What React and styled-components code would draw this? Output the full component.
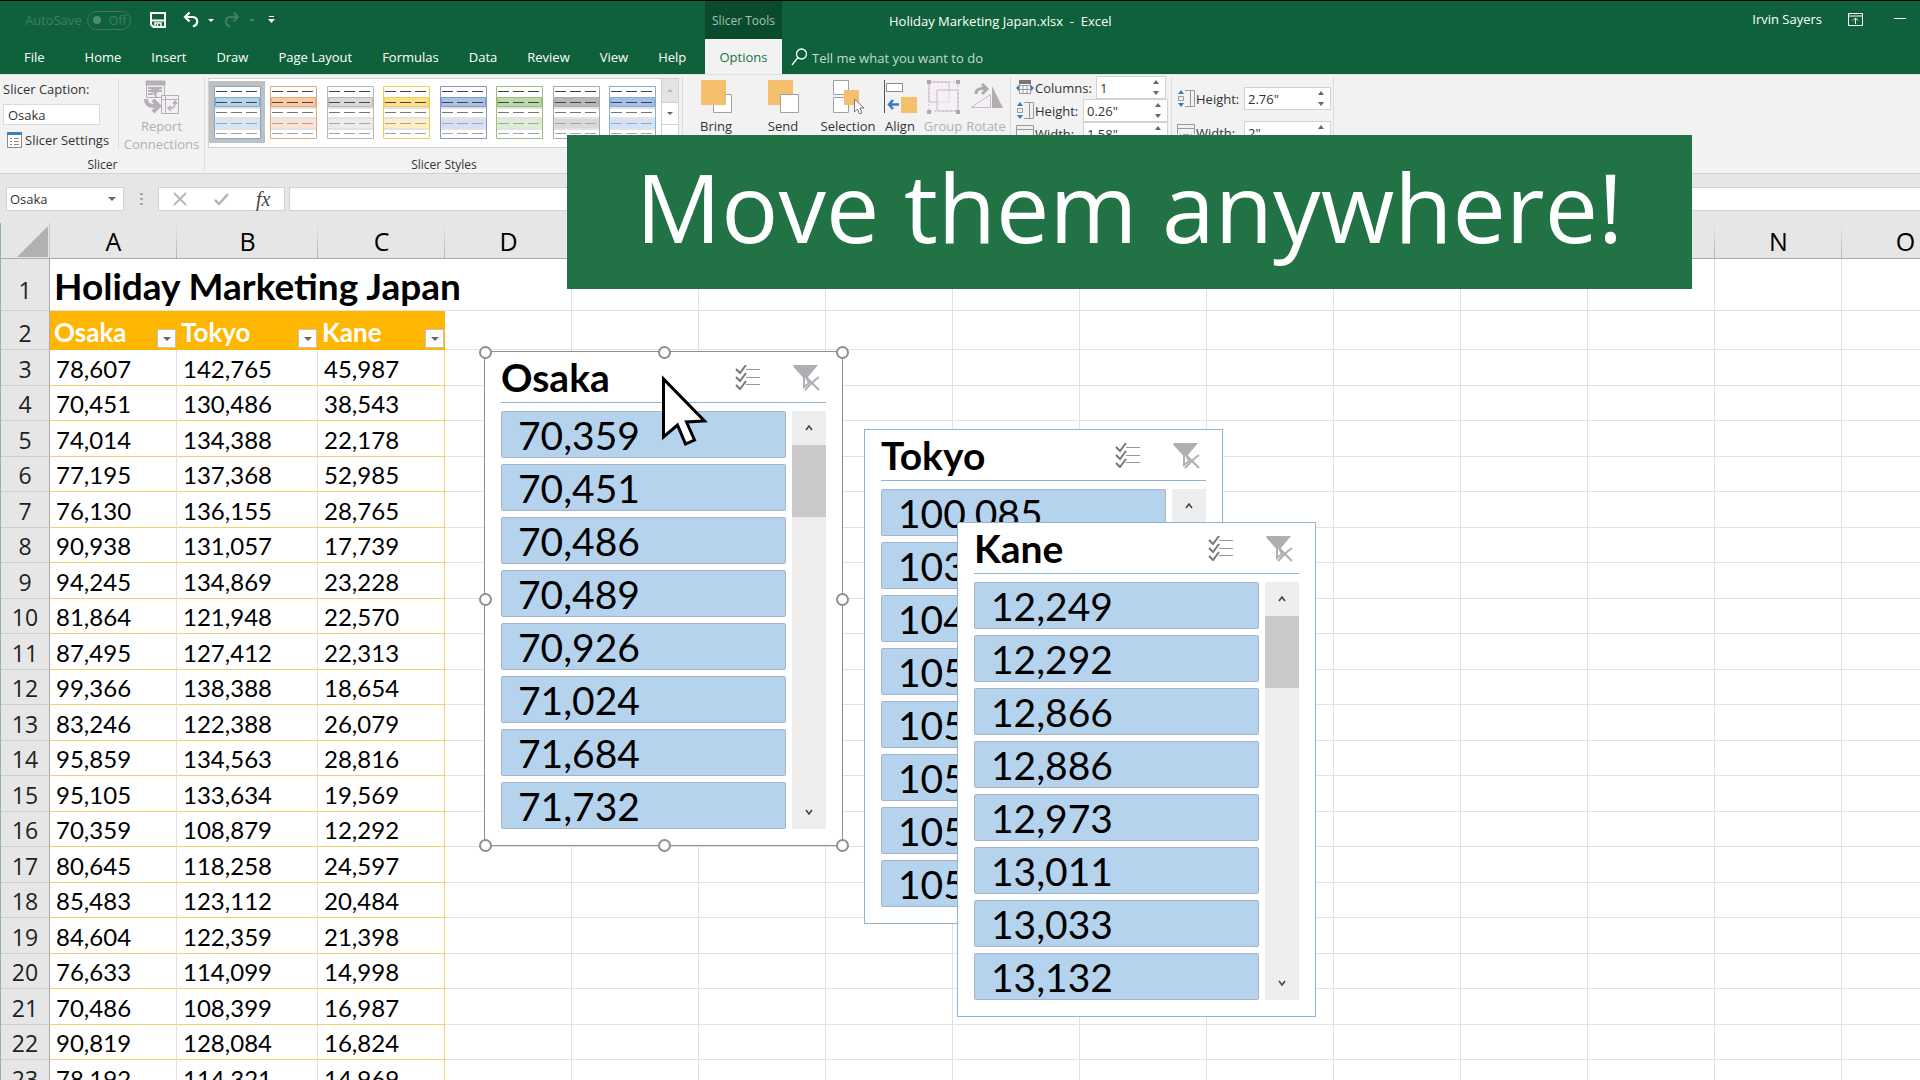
import React, { useState } from "react";
import styled, { createGlobalStyle, css } from "styled-components";

// Theme==============
const color = {
  green: "#0f613c",
  darkGreen: "#0a4a2d",
  banner: "#217346",
  ribbon: "#f2f2f2",
  chrome: "#e6e6e6",
  line: "#d2d2d2",
  text: "#333333",
  muted: "#b1b1b1",
  header: "#ffb600",
  item: "#b6d3ee",
  slicerLine: "#8db4d2",
};
const ui = `"Open Sans", "Noto Sans", sans-serif`;
const body = `Lato, "Open Sans", sans-serif`;
// ===================

const GlobalStyle = createGlobalStyle`
  * { box-sizing: border-box; }
  body {
    margin: 0;
    overflow: hidden;
    font-family: ${ui};
    font-size: 13px;
    color: ${color.text};
  }
  button, input {
    font: inherit;
    color: inherit;
    margin: 0;
    padding: 0;
    border: 0;
    background: none;
  }
  svg { display: block; flex: none; }
`;

const Page = styled.div`
  position: relative;
  height: 100vh;
  overflow: hidden;
  background: white;
`;

// Title bar and tabs
const TopBar = styled.header`
  background: ${color.green};
  border-top: 1px solid black;
  color: white;
`;

const TitleRow = styled.div`
  display: flex;
  height: 38px;
`;

const QuickAccess = styled.div`
  width: 705px;
  display: flex;
  align-items: center;
  padding-left: 25px;
`;

const AutoSave = styled.label`
  display: flex;
  align-items: center;
  gap: 5px;
  width: 125px;
  color: #3f8060;
`;

const Toggle = styled.button`
  display: flex;
  align-items: center;
  gap: 8px;
  width: 44px;
  height: 19px;
  padding-left: 5px;
  border: 1px solid #3a7a5a;
  border-radius: 10px;
  font-size: 12px;
  &::before {
    content: "";
    width: 8px;
    height: 8px;
    border-radius: 50%;
    background: #4c8a6b;
  }
`;

const QuickButton = styled.button`
  display: flex;
  align-items: center;
  gap: 9px;
  width: ${({ $width }) => $width}px;
  color: ${({ $dim }) => ($dim ? "#3f8060" : "white")};
`;

const ContextTitle = styled.div`
  width: 77px;
  line-height: 40px;
  text-align: center;
  font-size: 12px;
  white-space: nowrap;
  background: ${color.darkGreen};
  color: #a3c5b3;
`;

const DocTitle = styled.div`
  padding-left: 107px;
  line-height: 40px;
  white-space: pre;
`;

const WindowTools = styled.div`
  display: flex;
  align-items: center;
  margin-left: auto;
  padding: 0 14px 2px 0;
`;

const WindowButton = styled.button`
  margin-left: ${({ $gap }) => $gap}px;
`;

const TabRow = styled.nav`
  display: flex;
  height: 35px;
`;

const TabList = styled.div`
  display: flex;
  width: 705px;
  padding-left: 9px;
`;

const Tab = styled.button`
  padding: 0 15px;
  white-space: nowrap;
  &:first-child {
    padding-right: 25px;
  }
  ${({ $active }) =>
    $active &&
    css`
      width: 77px;
      padding: 0;
      background: ${color.ribbon};
      color: ${color.banner};
    `}
`;

const TellMe = styled.label`
  display: flex;
  align-items: center;
  gap: 4px;
  padding-left: 9px;
  input {
    width: 220px;
    padding-top: 2px;
  }
  input::placeholder {
    color: #c3dacd;
    opacity: 1;
  }
`;

// Ribbon
const RibbonBar = styled.section`
  display: flex;
  height: 100px;
  background: ${color.ribbon};
  border-top: 1px solid #d5e6dc;
  border-bottom: 1px solid ${color.line};
`;

const Group = styled.div`
  display: flex;
  flex-direction: column;
  justify-content: space-between;
  width: ${({ $width }) => $width}px;
  position: relative;
  &::after {
    content: "";
    position: absolute;
    top: 2px;
    right: 0;
    bottom: 2px;
    width: 1px;
    background: #dcdcdc;
  }
`;

const GroupLabel = styled.div`
  text-align: center;
  font-size: 12px;
  line-height: 16px;
`;

const CaptionArea = styled.div`
  display: flex;
`;

const CaptionFields = styled.div`
  display: flex;
  flex-direction: column;
  width: 119px;
  height: 70px;
  margin-top: 4px;
  padding-left: 3px;
  border-right: 1px solid #dcdcdc;
  label {
    line-height: 20px;
  }
  input {
    width: 97px;
    height: 22px;
    margin: 5px 0 6px;
    padding-left: 4px;
    border: 1px solid #dadada;
    background: white;
  }
`;

const SettingsButton = styled.button`
  display: flex;
  align-items: center;
  gap: 3px;
  padding-left: 4px;
  line-height: 18px;
  white-space: nowrap;
`;

const BigButton = styled.button`
  display: flex;
  flex-direction: column;
  align-items: center;
  gap: 3px;
  width: ${({ $width }) => $width}px;
  padding-top: 5px;
  line-height: 18px;
  white-space: nowrap;
  color: ${({ disabled }) => (disabled ? color.muted : color.text)};
`;

const Gallery = styled.div`
  display: flex;
  height: 70px;
  margin: 3px 4px 0 3px;
  border: 1px solid ${color.line};
  background: white;
`;

const Swatches = styled.div`
  flex: 1;
  display: flex;
  justify-content: space-between;
  padding: 2px 0 4px;
`;

const Swatch = styled.button`
  display: grid;
  place-items: center;
  width: 56px;
  background: ${({ $selected }) => ($selected ? "#c0c0c0" : "white")};
`;

const GalleryScroll = styled.div`
  display: grid;
  grid-template-rows: 1fr 1fr 1fr;
  width: 17px;
  border-left: 1px solid ${color.line};
`;

const GalleryArrow = styled.button`
  display: grid;
  place-items: center;
  background: ${({ $off }) => ($off ? "#e4e4e4" : "white")};
  color: ${({ $off }) => ($off ? "#b9b9b9" : "#666")};
  & + & {
    border-top: 1px solid ${color.line};
  }
`;

const ArrangeRow = styled.div`
  display: flex;
`;

const Fields = styled.div`
  display: flex;
  flex-direction: column;
  gap: ${({ $gap }) => $gap}px;
  padding: ${({ $top }) => $top}px 0 0 5px;
`;

const Field = styled.div`
  display: flex;
  align-items: center;
  height: 23px;
  label {
    width: ${({ $label }) => $label}px;
    margin-left: 1px;
    white-space: nowrap;
  }
`;

const SpinBox = styled.div`
  display: flex;
  align-items: center;
  width: ${({ $width }) => $width}px;
  height: 23px;
  padding-right: 5px;
  border: 1px solid ${color.line};
  background: white;
  input {
    flex: 1;
    min-width: 0;
    padding-left: 3px;
  }
`;

// Formula bar
const FormulaRow = styled.section`
  display: flex;
  height: 49px;
  padding: 13px 0 12px 6px;
  background: ${color.chrome};
`;

const NameBox = styled.div`
  display: flex;
  align-items: center;
  width: 118px;
  border: 1px solid ${color.line};
  background: white;
  color: #666;
  input {
    width: 101px;
    padding-left: 3px;
    color: ${color.text};
  }
`;

const Dots = styled.div`
  display: grid;
  place-items: center;
  width: 34px;
`;

const FormulaButtons = styled.div`
  display: flex;
  justify-content: space-around;
  align-items: center;
  width: 127px;
  border: 1px solid ${color.line};
  background: white;
`;

const FxButton = styled.button`
  font: italic 20px/20px "Liberation Serif", serif;
  color: #444;
`;

const FormulaInput = styled.input`
  flex: 1;
  margin-left: 4px;
  border: 1px solid ${color.line};
  border-right: 0;
  background: white;
`;

// Sheet
const SheetArea = styled.main`
  border-left: 1px solid #8fb5a3;
`;

const Sheet = styled.table`
  table-layout: fixed;
  width: 100%;
  border-spacing: 0;
  color: black;
`;

const ColHead = styled.th`
  height: 36px;
  padding: 1px 0 0;
  font-size: 25px;
  font-weight: 400;
  line-height: 34px;
  background: linear-gradient(#e6e6e6, #b4b4b4) right / 1px 100% no-repeat
    ${color.chrome};
  border-bottom: 1px solid #ababab;
`;

const Corner = styled(ColHead)`
  background: ${color.chrome};
  border-right: 1px solid #c6c6c6;
  svg {
    margin: 0 0 0 16px;
  }
`;

const Row = styled.tr`
  height: 36px;
  &:nth-child(even) {
    height: 35px;
  }
  &:nth-child(1) {
    height: 52px;
  }
  &:nth-child(2) {
    height: 39px;
  }
`;

const RowHead = styled.th`
  padding: 0;
  font-size: 23px;
  font-weight: 400;
  line-height: 32px;
  vertical-align: bottom;
  color: #222;
  background: ${color.chrome};
  border-right: 1px solid #ababab;
  border-bottom: 1px solid #cfcfcf;
  tr:first-child > & {
    line-height: 40px;
  }
`;

const Cell = styled.td`
  padding: 0 0 0 6px;
  border-right: 1px solid #e1e1e1;
  border-bottom: 1px solid #e1e1e1;
  font-family: ${body};
  font-size: 24px;
  line-height: 32px;
  vertical-align: bottom;
  white-space: nowrap;
`;

const DataCell = styled(Cell)`
  border-bottom-color: #f0d270;
  &:nth-child(4) {
    border-right-color: #f0d270;
  }
`;

const TitleCell = styled(Cell)`
  padding-left: 4px;
  font-size: 37px;
  font-weight: 700;
  line-height: 48px;
`;

const HeaderCell = styled(Cell)`
  padding: 0 0 1px 4px;
  border-color: ${color.header};
  background: ${color.header};
  color: white;
  font-size: 26px;
  font-weight: 700;
`;

const HeaderContent = styled.div`
  display: flex;
  justify-content: space-between;
  align-items: flex-end;
`;

const FilterButton = styled.button`
  display: grid;
  place-items: center;
  width: 19px;
  height: 19px;
  border: 1px solid #c9c3b0;
  background: white;
  color: #666;
`;

// Slicers float on top of the sheet
const SlicerBox = styled.section`
  position: absolute;
  left: ${({ $x }) => $x}px;
  top: ${({ $y }) => $y}px;
  width: 359px;
  height: 495px;
  padding: 0 16px;
  background: white;
  color: black;
  border: 1px solid ${({ $selected }) => ($selected ? "#8f8f8f" : color.slicerLine)};
`;

const SlicerHead = styled.div`
  display: flex;
  align-items: center;
  height: 51px;
  border-bottom: 1px solid ${color.slicerLine};
  h2 {
    flex: 1;
    margin: 0;
    font-family: ${body};
    font-size: 39px;
    line-height: 46px;
  }
`;

const HeadButton = styled.button`
  margin: 0 6px 0 26px;
`;

const SlicerBody = styled.div`
  display: flex;
  justify-content: space-between;
  height: 418px;
  margin-top: 8px;
  overflow: hidden;
`;

const Items = styled.div`
  display: flex;
  flex-direction: column;
  gap: 6px;
  width: 285px;
`;

const Item = styled.button`
  flex: none;
  height: 47px;
  padding-left: 16px;
  border: 1px solid #a6b3c8;
  border-radius: 2px;
  background: ${color.item};
  text-align: left;
  font-family: ${body};
  font-size: 39px;
  line-height: 44px;
`;

const ScrollTrack = styled.div`
  display: flex;
  flex-direction: column;
  justify-content: space-between;
  width: 34px;
  background: #eeeeee;
`;

const ScrollArrow = styled.button`
  display: grid;
  place-items: center;
  height: 34px;
`;

const ScrollThumb = styled.div`
  height: 72px;
  margin-bottom: auto;
  background: #c9c9c9;
`;

const Handle = styled.span`
  position: absolute;
  left: ${({ $left }) => $left};
  top: ${({ $top }) => $top};
  width: 13px;
  height: 13px;
  margin: -6px 0 0 -6px;
  border: 2px solid #8f8f8f;
  border-radius: 50%;
  background: white;
`;

const Pointer = styled.svg`
  position: absolute;
  left: 659px;
  top: 370px;
`;

const Banner = styled.div`
  position: absolute;
  left: 567px;
  top: 135px;
  width: 1125px;
  height: 154px;
  background: ${color.banner};
  color: white;
  font-size: 95px;
  line-height: 142px;
  text-align: center;
  white-space: nowrap;
`;

// Data
const tabs = [
  "File",
  "Home",
  "Insert",
  "Draw",
  "Page Layout",
  "Formulas",
  "Data",
  "Review",
  "View",
  "Help",
];

const swatches = [
  ["#7fa9cf", "#b6d3ee", "#d6e6f3"],
  ["#e5a878", "#fbc9a5", "#fce3d5"],
  ["#b8b8b8", "#d9d9d9", "#ececec"],
  ["#f0cf58", "#ffe08a", "#fff0c4"],
  ["#8097cb", "#aebfe6", "#d7dff2"],
  ["#98bf7b", "#bfd8ab", "#dfecd6"],
  ["#aaaaaa", "#b8b8b8", "#d9d9d9"],
  ["#86aed0", "#a3bfea", "#d3e2f8"],
];

const rows = [
  ["78,607", "142,765", "45,987"],
  ["70,451", "130,486", "38,543"],
  ["74,014", "134,388", "22,178"],
  ["77,195", "137,368", "52,985"],
  ["76,130", "136,155", "28,765"],
  ["90,938", "131,057", "17,739"],
  ["94,245", "134,869", "23,228"],
  ["81,864", "121,948", "22,570"],
  ["87,495", "127,412", "22,313"],
  ["99,366", "138,388", "18,654"],
  ["83,246", "122,388", "26,079"],
  ["95,859", "134,563", "28,816"],
  ["95,105", "133,634", "19,569"],
  ["70,359", "108,879", "12,292"],
  ["80,645", "118,258", "24,597"],
  ["85,483", "123,112", "20,484"],
  ["84,604", "122,359", "21,398"],
  ["76,633", "114,099", "14,998"],
  ["70,486", "108,399", "16,987"],
  ["90,819", "128,084", "16,824"],
  ["78,192", "114,321", "14,969"],
];

const letters = "ABCDEFGHIJKLMNO".split("");

const slicers = [
  {
    name: "Osaka",
    x: 484,
    y: 351,
    selected: true,
    items: ["70,359", "70,451", "70,486", "70,489", "70,926", "71,024", "71,684", "71,732"],
  },
  {
    name: "Tokyo",
    x: 864,
    y: 429,
    items: ["100,085", "103,270", "104,116", "105,028", "105,204", "105,391", "105,617", "105,842"],
  },
  {
    name: "Kane",
    x: 957,
    y: 522,
    items: ["12,249", "12,292", "12,866", "12,886", "12,973", "13,011", "13,033", "13,132"],
  },
];

const handles = [
  ["0%", "0%"],
  ["50%", "0%"],
  ["100%", "0%"],
  ["0%", "50%"],
  ["100%", "50%"],
  ["0%", "100%"],
  ["50%", "100%"],
  ["100%", "100%"],
];

// Icons
const Caret = ({ up, size = 8 }) => (
  <svg width={size} height={size / 2} viewBox="0 0 8 4" fill="currentColor">
    <path d={up ? "M0 4h8L4 0z" : "M0 0h8L4 4z"} />
  </svg>
);

const SaveIcon = () => (
  <svg width="16" height="16" viewBox="0 0 16 16" fill="none" stroke="currentColor" strokeWidth="2">
    <path d="M1 1h14v14H3.500L1 12.500z" />
    <path d="M1 8.500h14" />
    <path d="M5 15v-4h6v4M7.500 12v3" strokeWidth="1.500" />
  </svg>
);

const UndoIcon = ({ flip }) => (
  <svg width="16" height="16" viewBox="0 0 16 16" fill="none" stroke="currentColor" strokeWidth="2.200">
    <g transform={flip ? "matrix(-1 0 0 1 16 0)" : undefined}>
      <path d="M6.500 0.500 2 5l4.500 4.500" />
      <path d="M2 5h7c6.500 0 7 7.500 1 9.500" />
    </g>
  </svg>
);

const RibbonToggleIcon = () => (
  <svg width="15" height="13" viewBox="0 0 15 13" fill="none" stroke="white">
    <path d="M.5.5h14v12H.5zM.5 3h14M7.500 11V5M5 7.500 7.500 5 10 7.500" />
  </svg>
);

const SearchIcon = () => (
  <svg width="17" height="18" viewBox="0 0 17 18" fill="none" stroke="white" strokeWidth="1.300">
    <circle cx="10.500" cy="6" r="5" />
    <path d="M7 9.500 1 17" />
  </svg>
);

const ReportIcon = () => (
  <svg width="35" height="34" viewBox="0 0 35 34" fill="none" stroke="#b5b0b5">
    <path d="M2.500 1.500h18v16h-18z" fill="#f3edf3" />
    <path d="M2 1h19v4H2z" fill="#b5b0b5" />
    <path d="M4 8h14M4 11h6M13 11h5M4 14h5" strokeWidth="2" />
    <path d="M7 8h9l-4 5v4z" fill="#b5b0b5" />
    <path d="M2 19c0 7 5 7 11 7M9 20l6 6-6 6" strokeWidth="4" />
    <path d="M17.500 15.500h17v18h-17z" fill="#f6eef6" />
    <path d="M17.500 19.500h17M21.500 15.500v18" />
    <path d="M24 28h3c4 0 4-3 4-6M29 24l2-3 2 3M27 26l-3 2 3 3" strokeWidth="1.500" />
  </svg>
);

const SettingsIcon = () => (
  <svg width="15" height="16" viewBox="0 0 15 16" fill="none" stroke="#8a8a8a">
    <path d="M.5.5h14v15H.5z" fill="white" />
    <path d="M0 0h15v3H0z" fill="#3f7fb9" stroke="none" />
    <path d="M3 6.500h2M7 6.500h5M3 9.500h2M7 9.500h5M3 12.500h2M7 12.500h5" />
  </svg>
);

const SwatchIcon = ({ edge, head, tint }) => (
  <svg width="47" height="53" viewBox="0 0 47 53">
    <path d="M.5.5h46v52H.5z" fill="white" stroke={edge} />
    <path d="M1.500 11.500h44v9h-44z" fill={head} stroke={edge} />
    <path d="M1 21h45v2H1zM1 31h45v2H1zM1 42h45v2H1z" fill="#e3e3e3" />
    <path d="M1 33h45v9H1z" fill={tint} />
    <g fill="none" strokeDasharray="11 4">
      <path d="M2 5.500h43M2 16.500h43" stroke="#444" />
      <path d="M2 26.500h43" stroke="#777" />
      <path d="M2 37.500h43M2 47.500h43" stroke="#a5a5a5" />
    </g>
  </svg>
);

const arrangeIcons = {
  Bring: (
    <svg width="31" height="34" viewBox="0 0 31 34">
      <path d="M12.500 14.500h18v18h-18z" fill="white" stroke="#a0a0a0" />
      <path d="M0 0h25v25H0z" fill="#f4c06e" />
    </svg>
  ),
  Send: (
    <svg width="31" height="34" viewBox="0 0 31 34">
      <path d="M0 0h25v25H0z" fill="#f4c06e" />
      <path d="M12.500 14.500h18v18h-18z" fill="white" stroke="#a0a0a0" />
    </svg>
  ),
  Selection: (
    <svg width="31" height="34" viewBox="0 0 31 34">
      <path d="M.5.5h15v14H.5zM.5 17.500h15v15H.5z" fill="white" stroke="#a0a0a0" />
      <path d="M11 10h15v15H11z" fill="#f4c06e" />
      <path d="M21.500 19v13l3-3 2 5 2.500-1-2-5h4z" fill="white" stroke="#777" />
    </svg>
  ),
  Align: (
    <svg width="33" height="34" viewBox="0 0 33 34">
      <path d="M.5 0v33" stroke="#555" />
      <path d="M2.500 3.500h16v8h-16z" fill="white" stroke="#888" />
      <path d="M17 17h16v16H17z" fill="#f4c06e" />
      <path d="M15 24.500H6M9 20l-4 4.500L9 29" fill="none" stroke="#3a78c3" strokeWidth="2.500" />
    </svg>
  ),
  Group: (
    <svg width="33" height="34" viewBox="0 0 33 34">
      <g fill="#f7eef7" stroke="#c5bcc5">
        <path d="M2 2h20v20H2z" />
        <path d="M10 10h21v21H10z" fillOpacity=".6" />
        <path d="M2 2h29v29H2z" fill="none" strokeDasharray="2 2" />
      </g>
      <path d="M0 0h4v4H0zM29 0h4v4h-4zM0 30h4v4H0zM29 30h4v4h-4z" fill="#aaa" />
    </svg>
  ),
  Rotate: (
    <svg width="33" height="34" viewBox="0 0 33 34">
      <path d="M20.500 14.500v13H1z" fill="#f7eef7" stroke="#c5bcc5" />
      <path d="M22 6v22h11z" fill="#b3adb3" />
      <path d="M6 14c0-6 6-6 11-5M12 4l5 5-5 5" fill="none" stroke="#aaa" strokeWidth="3" />
    </svg>
  ),
};

const FieldIcon = ({ kind }) => (
  <svg width="18" height="17" viewBox="0 0 18 17" fill="none" stroke="#999">
    {kind === "columns" && (
      <>
        <path d="M3.500 2.500h11v12h-11zM3 6.500h12M3 10.500h12M7 6v8M11 6v8" fill="white" />
        <path d="M3 1h12v4H3z" fill="#777" stroke="none" />
        <path d="M0 9l3-3v6zM18 9l-3-3v6z" fill="#3a78c3" stroke="none" />
      </>
    )}
    {kind === "height" && (
      <>
        <path d="M8 .5h9.500v16H8M13.500 0v17M1.500 6.500h5v4h-5z" />
        <path d="M4 0l3 4H1zM4 17l3-4H1z" fill="#3a78c3" stroke="none" />
      </>
    )}
    {kind === "width" && (
      <>
        <path d="M.5 10V.5h17V10M0 4.500h18M6.500 10.500h5v5h-5z" />
        <path d="M0 13l4-3v6zM18 13l-4-3v6z" fill="#3a78c3" stroke="none" />
      </>
    )}
  </svg>
);

const MultiSelectIcon = () => (
  <svg width="26" height="25" viewBox="0 0 26 25" fill="none" stroke="#777">
    <path d="M1 4l4 4 6-8M1 12l4 4 6-8M1 20l4 4 6-8" strokeWidth="2" />
    <path d="M11 4.500h14M11 12.500h14M11 19.500h14" stroke="#999" />
  </svg>
);

const ClearFilterIcon = () => (
  <svg width="27" height="27" viewBox="0 0 27 27" fill="none" stroke="#b0adb3">
    <path d="M0 1h25l-10 12h-5z" fill="#b0adb3" stroke="none" />
    <path d="M1 2l10 11v10l5-4-3-6" strokeWidth="2" />
    <path d="M13 13l13 13M26 13c-6 4-9 8-14 13" strokeWidth="2" />
  </svg>
);

const Chevron = ({ up }) => (
  <svg width="8" height="6" viewBox="0 0 8 6" fill="none" stroke="#444" strokeWidth="1.600">
    <path d={up ? "M1 5l3-4 3 4" : "M1 1l3 4 3-4"} />
  </svg>
);

// Components==============
function NumberField({ id, kind, label, value, labelWidth, width }) {
  const [text, setText] = useState(value);

  return (
    <Field $label={labelWidth}>
      <FieldIcon kind={kind} />
      <label htmlFor={id}>{label}</label>
      <SpinBox $width={width}>
        <input id={id} value={text} onChange={(e) => setText(e.target.value)} />
        <svg width="8" height="15" viewBox="0 0 8 15" fill="#666">
          <path d="M1 4h6L4 0zM1 11h6l-3 4z" />
        </svg>
      </SpinBox>
    </Field>
  );
}

function Header() {
  return (
    <TopBar>
      <TitleRow>
        <QuickAccess>
          <AutoSave>
            AutoSave
            <Toggle>Off</Toggle>
          </AutoSave>
          <QuickButton $width={33} aria-label="Save">
            <SaveIcon />
          </QuickButton>
          <QuickButton $width={41} aria-label="Undo">
            <UndoIcon />
            <Caret size={6} />
          </QuickButton>
          <QuickButton $width={44} $dim aria-label="Redo">
            <UndoIcon flip />
            <Caret size={6} />
          </QuickButton>
          <QuickButton $width={20} aria-label="Customize">
            <svg width="7" height="8" viewBox="0 0 7 8" fill="white">
              <path d="M1 0h5v1H1zM0 3h7L3.500 7z" />
            </svg>
          </QuickButton>
        </QuickAccess>
        <ContextTitle>Slicer Tools</ContextTitle>
        <DocTitle>{"Holiday Marketing Japan.xlsx  -  Excel"}</DocTitle>
        <WindowTools>
          Irvin Sayers
          <WindowButton $gap={26} aria-label="Ribbon options">
            <RibbonToggleIcon />
          </WindowButton>
          <WindowButton $gap={31} aria-label="Minimize">
            <svg width="12" height="2" viewBox="0 0 12 2">
              <path d="M0 .5h12" stroke="white" />
            </svg>
          </WindowButton>
        </WindowTools>
      </TitleRow>
      <TabRow>
        <TabList>
          {tabs.map((tab) => (
            <Tab key={tab}>{tab}</Tab>
          ))}
        </TabList>
        <Tab $active>Options</Tab>
        <TellMe>
          <SearchIcon />
          <input placeholder="Tell me what you want to do" aria-label="Tell me" />
        </TellMe>
      </TabRow>
    </TopBar>
  );
}

function Ribbon() {
  const [caption, setCaption] = useState("Osaka");
  const [style, setStyle] = useState(0);

  return (
    <RibbonBar>
      <Group $width={205}>
        <CaptionArea>
          <CaptionFields>
            <label htmlFor="caption">Slicer Caption:</label>
            <input
              id="caption"
              value={caption}
              onChange={(e) => setCaption(e.target.value)}
            />
            <SettingsButton>
              <SettingsIcon />
              Slicer Settings
            </SettingsButton>
          </CaptionFields>
          <BigButton $width={85} disabled>
            <ReportIcon />
            <span>
              Report
              <br />
              Connections
            </span>
          </BigButton>
        </CaptionArea>
        <GroupLabel>Slicer</GroupLabel>
      </Group>
      <Group $width={478}>
        <Gallery>
          <Swatches>
            {swatches.map(([edge, head, tint], i) => (
              <Swatch
                key={edge}
                $selected={i === style}
                onClick={() => setStyle(i)}
                aria-label={`Slicer style ${i + 1}`}
              >
                <SwatchIcon edge={edge} head={head} tint={tint} />
              </Swatch>
            ))}
          </Swatches>
          <GalleryScroll>
            <GalleryArrow $off aria-label="Previous styles">
              <Caret up size={6} />
            </GalleryArrow>
            <GalleryArrow aria-label="Next styles">
              <Caret size={6} />
            </GalleryArrow>
            <GalleryArrow aria-label="More styles">
              <Caret size={6} />
            </GalleryArrow>
          </GalleryScroll>
        </Gallery>
        <GroupLabel>Slicer Styles</GroupLabel>
      </Group>
      <Group $width={328}>
        <ArrangeRow>
          <BigButton $width={66}>{arrangeIcons.Bring}Bring</BigButton>
          <BigButton $width={68}>{arrangeIcons.Send}Send</BigButton>
          <BigButton $width={62}>{arrangeIcons.Selection}Selection</BigButton>
          <BigButton $width={42}>{arrangeIcons.Align}Align</BigButton>
          <BigButton $width={44} disabled>
            {arrangeIcons.Group}Group
          </BigButton>
          <BigButton $width={42} disabled>
            {arrangeIcons.Rotate}Rotate
          </BigButton>
        </ArrangeRow>
      </Group>
      <Group $width={161}>
        <Fields $gap={0} $top={1}>
          <NumberField id="cols" kind="columns" label="Columns:" value="1" labelWidth={61} width={70} />
          <NumberField id="bh" kind="height" label="Height:" value={'0.26"'} labelWidth={48} width={85} />
          <NumberField id="bw" kind="width" label="Width:" value={'1.58"'} labelWidth={48} width={85} />
        </Fields>
      </Group>
      <Group $width={162}>
        <Fields $gap={11} $top={12}>
          <NumberField id="sh" kind="height" label="Height:" value={'2.76"'} labelWidth={48} width={87} />
          <NumberField id="sw" kind="width" label="Width:" value={'2"'} labelWidth={48} width={87} />
        </Fields>
      </Group>
    </RibbonBar>
  );
}

function FormulaBar() {
  return (
    <FormulaRow>
      <NameBox>
        <input defaultValue="Osaka" aria-label="Name box" />
        <button aria-label="Names">
          <Caret />
        </button>
      </NameBox>
      <Dots>
        <svg width="3" height="13" viewBox="0 0 3 13" fill="#a8a8a8">
          <path d="M0 0h3v2H0zM0 5h3v2H0zM0 10h3v2H0z" />
        </svg>
      </Dots>
      <FormulaButtons>
        <button aria-label="Cancel">
          <svg width="14" height="14" viewBox="0 0 14 14" stroke="#b5b5b5" strokeWidth="1.800">
            <path d="M1 1l12 12M13 1L1 13" />
          </svg>
        </button>
        <button aria-label="Enter">
          <svg width="15" height="13" viewBox="0 0 15 13" fill="none" stroke="#b5b5b5" strokeWidth="2.500">
            <path d="M1 7l4 4 9-10" />
          </svg>
        </button>
        <FxButton>fx</FxButton>
      </FormulaButtons>
      <FormulaInput aria-label="Formula" />
    </FormulaRow>
  );
}

function Grid() {
  const rest = letters.slice(3);

  return (
    <SheetArea>
      <Sheet>
        <colgroup>
          <col width="49" />
          {letters.map((l) => (
            <col key={l} width={l === "B" ? 141 : 127} />
          ))}
        </colgroup>
        <thead>
          <tr>
            <Corner>
              <svg width="31" height="31" viewBox="0 0 31 31">
                <path d="M31 0v31H0z" fill="#b1b1b1" />
              </svg>
            </Corner>
            {letters.map((l) => (
              <ColHead key={l}>{l}</ColHead>
            ))}
          </tr>
        </thead>
        <tbody>
          <Row>
            <RowHead>1</RowHead>
            <TitleCell colSpan={4}>Holiday Marketing Japan</TitleCell>
            {rest.slice(1).map((l) => (
              <Cell key={l} />
            ))}
          </Row>
          <Row>
            <RowHead>2</RowHead>
            {slicers.map(({ name }) => (
              <HeaderCell key={name}>
                <HeaderContent>
                  {name}
                  <FilterButton aria-label={`Filter ${name}`}>
                    <Caret />
                  </FilterButton>
                </HeaderContent>
              </HeaderCell>
            ))}
            {rest.map((l) => (
              <Cell key={l} />
            ))}
          </Row>
          {rows.map((row, i) => (
            <Row key={i}>
              <RowHead>{i + 3}</RowHead>
              {row.map((value) => (
                <DataCell key={value}>{value}</DataCell>
              ))}
              {rest.map((l) => (
                <Cell key={l} />
              ))}
            </Row>
          ))}
        </tbody>
      </Sheet>
    </SheetArea>
  );
}

function Slicer({ name, x, y, selected, items }) {
  return (
    <SlicerBox $x={x} $y={y} $selected={selected}>
      <SlicerHead>
        <h2>{name}</h2>
        <HeadButton aria-label="Multi-select">
          <MultiSelectIcon />
        </HeadButton>
        <HeadButton aria-label="Clear filter">
          <ClearFilterIcon />
        </HeadButton>
      </SlicerHead>
      <SlicerBody>
        <Items>
          {items.map((item) => (
            <Item key={item}>{item}</Item>
          ))}
        </Items>
        <ScrollTrack>
          <ScrollArrow aria-label="Scroll up">
            <Chevron up />
          </ScrollArrow>
          <ScrollThumb />
          <ScrollArrow aria-label="Scroll down">
            <Chevron />
          </ScrollArrow>
        </ScrollTrack>
      </SlicerBody>
      {selected &&
        handles.map(([left, top]) => (
          <Handle key={left + top} $left={left} $top={top} />
        ))}
    </SlicerBox>
  );
}

export default function App() {
  return (
    <>
      <GlobalStyle />
      <Page>
        <Header />
        <Ribbon />
        <FormulaBar />
        <Grid />
        {slicers.map((slicer) => (
          <Slicer key={slicer.name} {...slicer} />
        ))}
        <Pointer width="52" height="80" viewBox="0 0 52 80">
          <path
            d="M4.500 9v58l14-12 8 19 9-4-8-18 18-1z"
            fill="white"
            stroke="black"
            strokeWidth="3"
          />
        </Pointer>
        <Banner>Move them anywhere!</Banner>
      </Page>
    </>
  );
}
